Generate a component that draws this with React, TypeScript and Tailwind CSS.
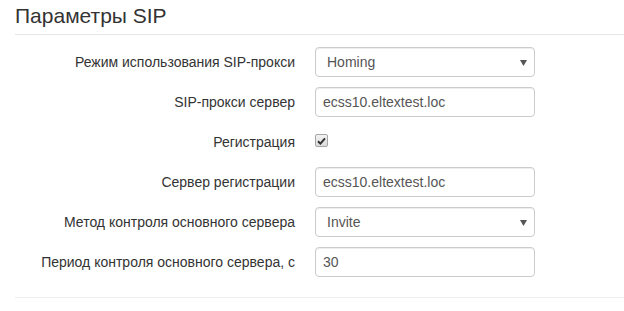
const FONT = { fontFamily: '"Liberation Sans", Arial, sans-serif' };

function Row({ label, children }: { label: string; children: React.ReactNode }) {
  return (
    <div className="flex items-center h-[30px]">
      <label className="w-[280px] text-right text-[14px] text-[#333]">{label}</label>
      <div className="ml-[20px] w-[220px]">{children}</div>
    </div>
  );
}

function TextInput({ value }: { value: string }) {
  return (
    <input
      readOnly
      value={value}
      className="w-full h-[30px] px-[7px] border border-[#ccc] rounded-[4px] bg-white text-[14px] text-[#555] shadow-[inset_0_1px_1px_rgba(0,0,0,0.075)] outline-none"
    />
  );
}

function Select({ value }: { value: string }) {
  return (
    <div className="relative w-full h-[30px] border border-[#ccc] rounded-[4px] bg-white shadow-[inset_0_1px_1px_rgba(0,0,0,0.075)] flex items-center">
      <span className="pl-[11px] text-[14px] text-[#555]">{value}</span>
      <svg
        className="absolute right-[7px] top-[12px]"
        width="7"
        height="6"
        viewBox="0 0 7 6"
      >
        <path d="M0 0h7L3.5 6z" fill="#555" />
      </svg>
    </div>
  );
}

function Checkbox() {
  return (
    <span className="flex items-center justify-center w-[13px] h-[13px] mt-[-3px] border border-[#a6a6a6] rounded-[2px] bg-gradient-to-b from-[#f2f2f2] to-[#dcdcdc]">
      <svg width="9" height="8" viewBox="0 0 9 8">
        <path d="M1 4.2 3.4 6.6 8 1.4" stroke="#333" strokeWidth="2" fill="none" />
      </svg>
    </span>
  );
}

export default function App() {
  return (
    <div className="w-[624px] h-[311px] bg-white overflow-hidden" style={FONT}>
      <div className="pl-[15px]">
        <h3 className="pt-[4px] pb-[6px] text-[21px] leading-[24px] text-[#333] border-b border-[#e5e5e5]">
          Параметры SIP
        </h3>
        <div className="flex flex-col gap-[10px] pt-[12px] pb-[20px] border-b border-[#eee]">
          <Row label="Режим использования SIP-прокси">
            <Select value="Homing" />
          </Row>
          <Row label="SIP-прокси сервер">
            <TextInput value="ecss10.eltextest.loc" />
          </Row>
          <Row label="Регистрация">
            <Checkbox />
          </Row>
          <Row label="Сервер регистрации">
            <TextInput value="ecss10.eltextest.loc" />
          </Row>
          <Row label="Метод контроля основного сервера">
            <Select value="Invite" />
          </Row>
          <Row label="Период контроля основного сервера, с">
            <TextInput value="30" />
          </Row>
        </div>
      </div>
    </div>
  );
}
